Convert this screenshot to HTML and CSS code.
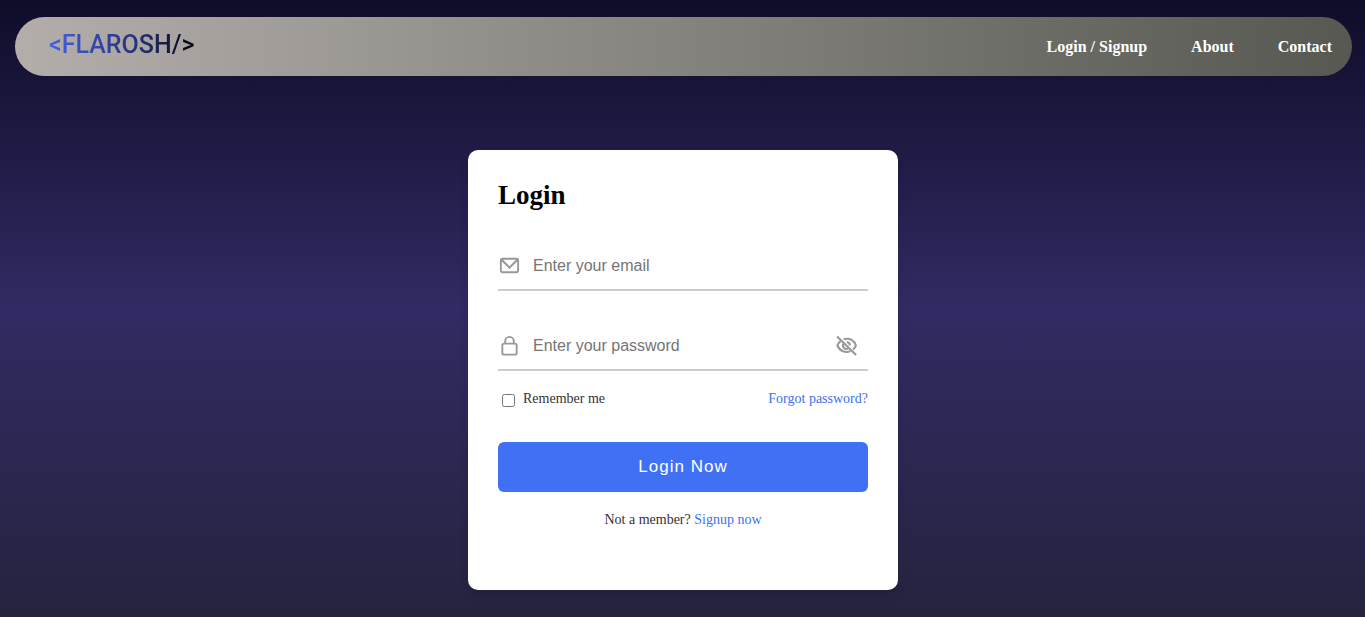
FILE: index.html
```html
<!DOCTYPE html>
<html lang="en">
<head>
<meta charset="utf-8">
<meta name="viewport" content="width=device-width, initial-scale=1">
<title>Flarosh - Login</title>
<link rel="stylesheet" href="styles.css">
</head>
<body>
<header class="header">
  <a class="logo" href="#">&lt;FLAROSH/&gt;</a>
  <nav class="nav">
    <a href="#">Login / Signup</a>
    <a href="#">About</a>
    <a href="#">Contact</a>
  </nav>
</header>
<main class="main">
  <form class="card">
    <h1 class="title">Login</h1>
    <div class="field">
      <svg class="icon" viewBox="0 0 24 24" aria-hidden="true"><path fill-rule="evenodd" d="M4.500 4h15a2.500 2.500 0 0 1 2.500 2.500v11a2.500 2.500 0 0 1-2.500 2.500h-15A2.500 2.500 0 0 1 2 17.500v-11A2.500 2.500 0 0 1 4.500 4zM5.300 6 12 12.700 18.700 6zM4 7.700V17.300c0 .4.300.7.700.7h14.600c.4 0 .7-.3.700-.7V7.700L12 15.700z"/></svg>
      <input class="input" type="email" placeholder="Enter your email" aria-label="Email">
    </div>
    <div class="field">
      <svg class="icon" viewBox="0 0 24 24" aria-hidden="true"><path fill-rule="evenodd" d="M17.500 9V7.500a5.500 5.500 0 0 0-11 0V9A3 3 0 0 0 3.500 12v7.500a3 3 0 0 0 3 3h11a3 3 0 0 0 3-3V12a3 3 0 0 0-3-3zM8.500 7.500a3.500 3.500 0 0 1 7 0V9h-7zM18.500 19.500a1 1 0 0 1-1 1h-11a1 1 0 0 1-1-1V12a1 1 0 0 1 1-1h11a1 1 0 0 1 1 1z"/></svg>
      <input class="input" type="password" placeholder="Enter your password" aria-label="Password">
      <button class="toggle" type="button" aria-label="Show password">
        <svg class="icon" viewBox="0 0 24 24" aria-hidden="true"><g class="eye"><path d="M9 5.500C15.500 3.500 20.300 7 21.800 12c-.6 1.800-1.600 3.200-2.900 4.300M5.800 7.400C4.200 8.500 3 10 2.500 12c2.400 6 8.700 8.200 13.500 5.900M12.300 8.400a3.600 3.600 0 0 1 3.200 3.600M8.700 10.400a3.700 3.700 0 0 0 4.900 4.900M2.200 2.500 22 22"/></g></svg>
      </button>
    </div>
    <div class="options">
      <div class="remember">
        <input class="check" type="checkbox" id="remember">
        <label for="remember">Remember me</label>
      </div>
      <a class="link" href="#">Forgot password?</a>
    </div>
    <button class="submit" type="submit">Login Now</button>
    <p class="signup">Not a member? <a class="link" href="#">Signup now</a></p>
  </form>
</main>
</body>
</html>
```
FILE: styles.css
```css
* {
  box-sizing: border-box;
  margin: 0;
  padding: 0;
}

body {
  min-height: 100vh;
  padding: 17px 13px 27px 15px;
  background: linear-gradient(to bottom, #0f0c29, #302b63, #24243e);
  font-family: "Liberation Serif", "Times New Roman", serif;
}

a {
  text-decoration: none;
}

.header {
  display: flex;
  align-items: center;
  justify-content: space-between;
  padding: 12px 20px 15px 34px;
  border-radius: 30px;
  background: linear-gradient(to right, #b4aeab, #565851);
}

.logo {
  background: linear-gradient(to right, #4560e0, #26327d 60%, #05060f);
  background-clip: text;
  -webkit-background-clip: text;
  color: transparent;
  font: 25px/32px Roboto, sans-serif;
  font-weight: 500;
}

.nav {
  display: flex;
  gap: 44px;
  padding-top: 3px;
}

.nav a {
  color: #fff;
  font-size: 16px;
  font-weight: bold;
  line-height: 20px;
}

.main {
  display: flex;
  justify-content: center;
  padding: 74px 1px 0 0;
}

.card {
  width: 430px;
  max-width: 100%;
  padding: 30px 30px 60px;
  border-radius: 10px;
  background: #fff;
  box-shadow: 0 5px 10px rgba(0, 0, 0, 0.1);
}

.title {
  font-size: 27px;
  line-height: 31px;
}

.field {
  display: flex;
  align-items: center;
  height: 50px;
  margin-top: 30px;
  border-bottom: 2px solid #ccc;
}

.icon {
  display: block;
  flex: none;
  width: 23px;
  height: 23px;
  fill: #999;
}

.eye {
  fill: none;
  stroke: #999;
  stroke-width: 2.2;
}

.input {
  flex: 1;
  min-width: 0;
  height: 48px;
  padding: 2px 12px 0;
  border: 0;
  outline: 0;
  background: transparent;
  font: 16px "Liberation Sans", Arial, sans-serif;
}

.input::placeholder {
  color: #757575;
}

.toggle {
  margin-right: 10px;
  border: 0;
  background: transparent;
  cursor: pointer;
}

.options {
  display: flex;
  align-items: center;
  justify-content: space-between;
  margin-top: 18px;
  color: #333;
  font-size: 14px;
  line-height: 20px;
}

.remember {
  display: flex;
  align-items: center;
  gap: 8px;
  padding-left: 4px;
}

.check {
  width: 13px;
  height: 13px;
  margin-top: 3px;
}

.link {
  color: #4070f4;
}

.submit {
  display: block;
  width: 100%;
  height: 50px;
  margin-top: 33px;
  border: 0;
  border-radius: 6px;
  background: #4070f4;
  color: #fff;
  font: 17px "Liberation Sans", Arial, sans-serif;
  letter-spacing: 1px;
  cursor: pointer;
}

.signup {
  margin-top: 18px;
  color: #333;
  font-size: 14px;
  line-height: 20px;
  text-align: center;
}
```
